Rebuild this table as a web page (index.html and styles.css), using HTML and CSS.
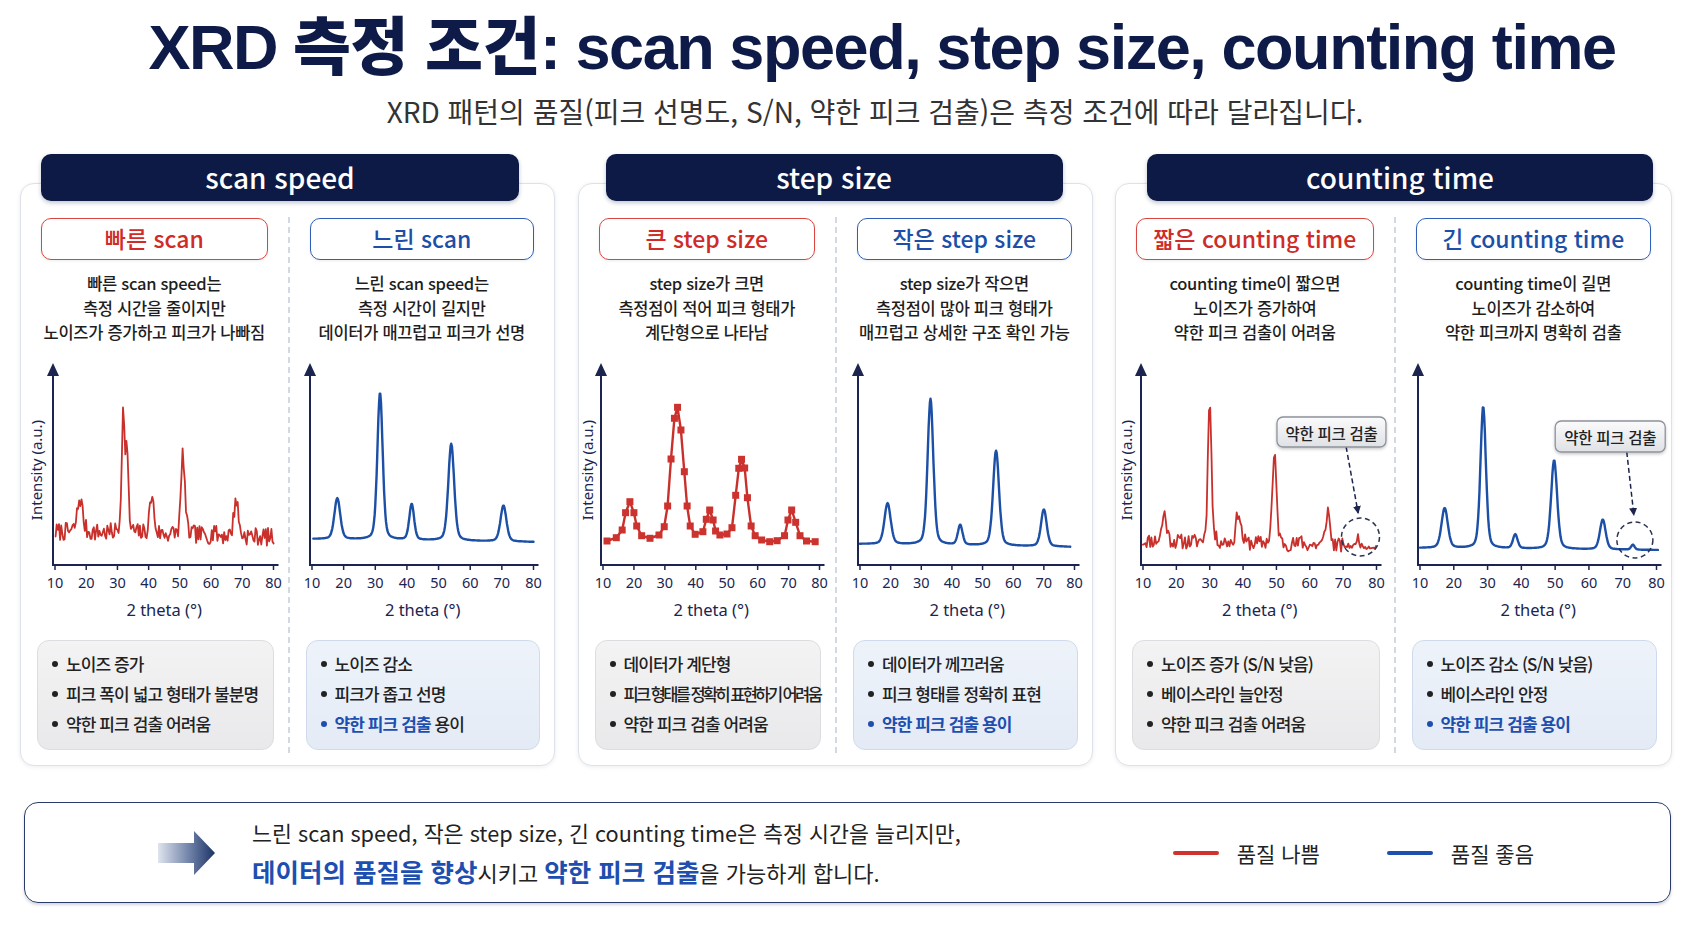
FILE: index.html
```html
<!DOCTYPE html>
<html lang="ko">
<head>
<meta charset="utf-8">
<title>XRD 측정 조건</title>
<link rel="stylesheet" href="styles.css">
</head>
<body>
<main class="page">
  <header class="hero">
    <h1 class="title">XRD <span class="title-ko">측정 조건</span>: scan speed, step size, counting time</h1>
    <p class="subtitle">XRD 패턴의 품질(피크 선명도, S/N, 약한 피크 검출)은 측정 조건에 따라 달라집니다.</p>
  </header>

  <section class="panels">
    <article class="panel panel-1">
      <h2 class="panel-head">scan speed</h2>
      <div class="panel-body">
        <div class="col">
          <div class="tag tag-bad">빠른 scan</div>
          <p class="desc">빠른 scan speed는<br>측정 시간을 줄이지만<br>노이즈가 증가하고 피크가 나빠짐</p>
          <svg class="chart" id="c1"></svg>
          <ul class="notes notes-bad">
            <li><span>노이즈 증가</span></li>
            <li><span>피크 폭이 넓고 형태가 불분명</span></li>
            <li><span>약한 피크 검출 어려움</span></li>
          </ul>
        </div>
        <div class="col col-right">
          <div class="tag tag-good">느린 scan</div>
          <p class="desc">느린 scan speed는<br>측정 시간이 길지만<br>데이터가 매끄럽고 피크가 선명</p>
          <svg class="chart" id="c2"></svg>
          <ul class="notes notes-good">
            <li><span>노이즈 감소</span></li>
            <li><span>피크가 좁고 선명</span></li>
            <li class="hl-dot"><span><b class="hl">약한 피크 검출</b> 용이</span></li>
          </ul>
        </div>
      </div>
    </article>

    <article class="panel panel-2">
      <h2 class="panel-head">step size</h2>
      <div class="panel-body">
        <div class="col">
          <div class="tag tag-bad">큰 step size</div>
          <p class="desc">step size가 크면<br>측정점이 적어 피크 형태가<br>계단형으로 나타남</p>
          <svg class="chart" id="c3"></svg>
          <ul class="notes notes-bad">
            <li><span>데이터가 계단형</span></li>
            <li class="tight"><span>피크 형태를 정확히 표현하기 어려움</span></li>
            <li><span>약한 피크 검출 어려움</span></li>
          </ul>
        </div>
        <div class="col col-right">
          <div class="tag tag-good">작은 step size</div>
          <p class="desc">step size가 작으면<br>측정점이 많아 피크 형태가<br>매끄럽고 상세한 구조 확인 가능</p>
          <svg class="chart" id="c4"></svg>
          <ul class="notes notes-good">
            <li><span>데이터가 께끄러움</span></li>
            <li><span>피크 형태를 정확히 표현</span></li>
            <li class="hl-dot"><span class="hl">약한 피크 검출 용이</span></li>
          </ul>
        </div>
      </div>
    </article>

    <article class="panel panel-3">
      <h2 class="panel-head">counting time</h2>
      <div class="panel-body">
        <div class="col">
          <div class="tag tag-bad">짧은 counting time</div>
          <p class="desc">counting time이 짧으면<br>노이즈가 증가하여<br>약한 피크 검출이 어려움</p>
          <svg class="chart" id="c5"></svg>
          <ul class="notes notes-bad">
            <li><span>노이즈 증가 (S/N 낮음)</span></li>
            <li><span>베이스라인 늘안정</span></li>
            <li><span>약한 피크 검출 어려움</span></li>
          </ul>
        </div>
        <div class="col col-right">
          <div class="tag tag-good">긴 counting time</div>
          <p class="desc">counting time이 길면<br>노이즈가 감소하여<br>약한 피크까지 명확히 검출</p>
          <svg class="chart" id="c6"></svg>
          <ul class="notes notes-good">
            <li><span>노이즈 감소 (S/N 낮음)</span></li>
            <li><span>베이스라인 안정</span></li>
            <li class="hl-dot"><span class="hl">약한 피크 검출 용이</span></li>
          </ul>
        </div>
      </div>
    </article>
  </section>

  <section class="summary">
    <svg class="summary-arrow" width="57" height="44" viewBox="0 0 57 44" aria-hidden="true">
      <defs>
        <linearGradient id="arrowGrad" x1="0" y1="0" x2="57" y2="0" gradientUnits="userSpaceOnUse">
          <stop offset="0" stop-color="#dfe4ee"/>
          <stop offset="0.55" stop-color="#6f82a8"/>
          <stop offset="1" stop-color="#1d3366"/>
        </linearGradient>
      </defs>
      <path d="M0 12 H36 V0 L57 22 L36 44 V32 H0 Z" fill="url(#arrowGrad)"/>
    </svg>
    <div class="summary-text">
      <p class="summary-line">느린 scan speed, 작은 step size, 긴 counting time은 측정 시간을 늘리지만,</p>
      <p class="summary-line summary-line-2"><strong>데이터의 품질을 향상</strong>시키고 <strong>약한 피크 검출</strong>을 가능하게 합니다.</p>
    </div>
    <div class="legend">
      <span class="legend-item"><span class="legend-line legend-bad"></span>품질 나쁨</span>
      <span class="legend-item"><span class="legend-line legend-good"></span>품질 좋음</span>
    </div>
  </section>
</main>
<script src="charts.js"></script>
</body>
</html>
```

FILE: styles.css
```css
* { box-sizing: border-box; margin: 0; padding: 0; }

html, body { background: #ffffff; }

body {
  width: 1693px;
  height: 929px;
  overflow: hidden;
  font-family: "Noto Sans CJK KR", "Noto Sans", sans-serif;
  color: #222;
}

.page { padding: 0 21px 0 20px; }

.hero {
  text-align: center;
  padding-left: 72px;
  padding-top: 14px;
}

.title {
  font-family: "Liberation Sans", "Noto Sans CJK KR", sans-serif;
  font-weight: 700;
  font-size: 63px;
  line-height: 66px;
  color: #0e1b48;
  letter-spacing: -1.45px;
}

.title-ko { letter-spacing: -0.5px; font-weight: 800; }

.subtitle {
  margin-top: 14px;
  font-size: 28px;
  line-height: 34px;
  color: #333;
  padding-right: 14px;
}

.panels {
  display: grid;
  grid-template-columns: 535px 515px 557px;
  justify-content: space-between;
  margin-top: 55px;
}

.panel {
  border: 1px solid #dde2ea;
  border-radius: 14px;
  background: #fff;
  box-shadow: 0 1px 4px rgba(20, 30, 60, 0.08);
  padding-bottom: 12px;
}

.panel-head {
  margin: -30px 27px 0;
  height: 47px;
  background: #0c1a45;
  border-radius: 10px;
  color: #fff;
  font-size: 28px;
  line-height: 46px;
  font-weight: 500;
  text-align: center;
  box-shadow: 0 2px 4px rgba(12, 26, 69, 0.25);
}

.panel-1 .panel-head { margin-left: 20px; margin-right: 35px; }
.panel-2 .panel-head { margin-left: 27px; margin-right: 29px; }
.panel-3 .panel-head { margin-left: 31px; margin-right: 18px; }

.panel-body {
  display: grid;
  grid-template-columns: 1fr 1fr;
  margin-top: 16px;
}

.col {
  display: flex;
  flex-direction: column;
  padding-bottom: 3px;
  min-width: 0;
}

.col-right { border-left: 2px dashed #d3d9e2; }

.tag {
  margin: 1px 20px 0;
  height: 42px;
  border: 1.5px solid;
  border-radius: 10px;
  background: #fff;
  font-size: 23px;
  line-height: 39px;
  font-weight: 500;
  text-align: center;
  white-space: nowrap;
  box-shadow: 0 1px 3px rgba(0, 0, 0, 0.08);
}

.tag-bad { color: #cf2b27; border-color: #d9463f; }
.tag-good { color: #1d4fa8; border-color: #2f5fb8; }

.desc {
  margin-top: 11px;
  font-size: 16.5px;
  line-height: 24.5px;
  font-weight: 500;
  text-align: center;
  color: #1e1e1e;
  white-space: nowrap;
  letter-spacing: -0.3px;
}

.chart {
  display: block;
  width: 100%;
  height: 266px;
  margin-top: 13.5px;
  overflow: visible;
}

.chart .tick { font-family: "Noto Sans", sans-serif; font-size: 14.5px; fill: #1b2550; }
.chart .xlabel { font-family: "Noto Sans", sans-serif; font-size: 16.5px; fill: #1b2550; }
.chart .ylabel { font-family: "Noto Sans", sans-serif; font-size: 15px; fill: #1b2550; }
.chart .callout { font-family: "Noto Sans CJK KR", sans-serif; font-size: 15.5px; font-weight: 500; fill: #222; letter-spacing: -0.3px; }

.notes {
  list-style: none;
  margin: 16px 14px 0 16px;
  height: 110px;
  padding: 8px 0 0 14px;
  border-radius: 12px;
  border: 1px solid;
}

.notes-bad {
  background: linear-gradient(180deg, #f3f3f4 0%, #e9e9eb 100%);
  border-color: #dcdde0;
}

.notes-good {
  background: linear-gradient(180deg, #eef3fa 0%, #e4ebf6 100%);
  border-color: #cfdbec;
}

.notes li {
  display: flex;
  align-items: center;
  gap: 8px;
  font-size: 17px;
  line-height: 30px;
  font-weight: 500;
  color: #222;
  white-space: nowrap;
  letter-spacing: -0.9px;
}

.notes li::before {
  content: "";
  flex: 0 0 6px;
  width: 6px;
  height: 6px;
  border-radius: 50%;
  background: #222;
}

.notes li.tight { font-size: 16.5px; letter-spacing: -2.6px; }

.notes .hl { color: #1d4fb0; font-weight: 700; }
.notes li.hl-dot::before { background: #1d4fb0; }

.summary {
  display: flex;
  align-items: center;
  margin: 36px 1px 0 4px;
  height: 101px;
  border: 1.5px solid #2a3b6a;
  border-radius: 14px;
  box-shadow: 0 2px 3px rgba(20, 30, 70, 0.18);
  padding: 0 136px 0 133px;
}

.summary-arrow { flex: 0 0 57px; }

.summary-text { margin-left: 37px; }

.summary-line {
  font-size: 21.7px;
  line-height: 38px;
  color: #222;
  white-space: nowrap;
}

.summary-line-2 { font-size: 22px; }

.summary-line strong {
  color: #1d4fb0;
  font-weight: 700;
  font-size: 25.5px;
}

.legend {
  margin-left: auto;
  display: flex;
  align-items: center;
  gap: 67px;
}

.legend-item {
  display: flex;
  align-items: center;
  gap: 18px;
  font-size: 21px;
  color: #222;
}

.legend-line {
  width: 46px;
  height: 4px;
  border-radius: 2px;
}

.legend-bad { background: #d0322c; }
.legend-good { background: #1d4fb0; }
```

FILE: charts.js
```js
(function () {
  var NS = 'http://www.w3.org/2000/svg';
  var RED = '#c9302b', BLUE = '#1c4fa6', AXIS = '#1b2550';
  var AXIS_Y = 207;

  function mk(tag, attrs, parent, text) {
    var e = document.createElementNS(NS, tag);
    for (var k in attrs) e.setAttribute(k, attrs[k]);
    if (text != null) e.textContent = text;
    if (parent) parent.appendChild(e);
    return e;
  }
  function rng(seed) {
    var s = seed >>> 0;
    return function () { s = (Math.imul(s, 1664525) + 1013904223) >>> 0; return s / 4294967296; };
  }
  function pk(t, c, f) {
    var d = (t - c) / f;
    return 0.7 * Math.exp(-4 * Math.LN2 * d * d) + 0.3 / (1 + 4 * d * d);
  }

  var CFG = {
    c1: { ax: 32, ex: 9, yl: 15, kind: 'noisy', color: RED, seed: 7, b0: 33, b1: 28, amp: 9, step: 0.36, range: [10.2, 80.3],
      peaks: [[18, 34, 2.0], [31.8, 116, 1.1], [33, 82, 1.1], [41, 38, 1.6], [51, 82, 1.4], [61, 12, 0.5], [68, 38, 1.6]] },
    c2: { ax: 20, ex: 16, kind: 'smooth', color: BLUE, b0: 26, b1: 23, range: [10.4, 80],
      peaks: [[18, 41, 2.2], [31.5, 147, 2.0], [41.5, 36, 1.8], [54, 97, 2.2], [70.5, 36, 2.2]] },
    c3: { ax: 22, ex: 11, yl: 8, kind: 'steps', color: RED,
      pts: [[11.3, 24], [14.3, 27.3], [16.2, 35], [17.3, 52.3], [18.7, 63.3], [20, 52.3], [20.9, 39], [22.5, 29.3], [25.2, 26.7],
        [28.1, 30], [29.8, 38.3], [30.9, 59], [32, 106], [33.1, 146.7], [34.1, 157.7], [35.2, 135], [36.3, 93.3], [37.2, 59],
        [38.2, 39], [39.8, 30.7], [42.3, 33.3], [43.4, 45.7], [44.5, 55], [45.6, 45], [46.4, 34], [47.8, 30], [50.1, 31],
        [51.7, 37.3], [52.9, 69.7], [53.9, 96.7], [54.8, 105.7], [55.8, 97], [56.7, 67.3], [57.9, 39], [59.2, 29.3], [61.3, 25],
        [63.9, 23.3], [66.3, 24.3], [68.7, 29.3], [69.8, 45], [71, 55], [72.3, 42.7], [73.7, 29.3], [75.8, 24], [78.6, 23.3]] },
    c4: { ax: 21, ex: 12, kind: 'smooth', color: BLUE, b0: 21, b1: 18, range: [10, 78.7],
      peaks: [[19, 41, 2.4], [33, 146, 2.2], [42.7, 20, 1.8], [54.4, 95, 2.3], [70, 37, 2.2]] },
    c5: { ax: 25, ex: 12, yl: 10, kind: 'noisy', color: RED, seed: 11, b0: 24, b1: 18, amp: 7.5, ampQ: 2.5, quiet: 70, step: 0.36, range: [10, 80],
      peaks: [[16.4, 28, 1.6], [30, 150, 1.2], [38.6, 32, 1.6], [49.4, 88, 1.5], [57.5, 10, 0.5], [65.4, 35, 1.5], [74.4, 11, 0.8]],
      call: { cx: 66.5, w: 109, top: 148, h: 30, a0: [70.9, 118], a1: [74.5, 50], cc: [75.2, 28], r: 19 } },
    c6: { ax: 22, ex: 10, kind: 'smooth', color: BLUE, b0: 17, b1: 15, range: [10, 80.5],
      peaks: [[17.3, 40, 2.2], [28.7, 142, 1.9], [38.2, 14, 1.6], [49.7, 89, 2.1], [64.1, 30, 2.0], [73, 5, 1.2]],
      call: { cx: 66.3, w: 110, top: 144, h: 31, a0: [71.2, 113], a1: [73.3, 48], cc: [73.6, 25], r: 18 } }
  };

  function draw(id) {
    var c = CFG[id];
    var svg = document.getElementById(id);
    var W = svg.getBoundingClientRect().width;
    svg.setAttribute('viewBox', '0 0 ' + W + ' 266');
    var t10 = c.ax + 2, t80 = W - c.ex - 5;
    function X(t) { return t10 + (t - 10) * (t80 - t10) / 70; }
    function Y(h) { return AXIS_Y - h; }

    var defs = mk('defs', {}, svg);

    /* axes */
    mk('line', { x1: c.ax, y1: 16, x2: c.ax, y2: AXIS_Y + 1, stroke: AXIS, 'stroke-width': 2 }, svg);
    mk('path', { d: 'M' + (c.ax - 6) + ' 18 L' + c.ax + ' 5 L' + (c.ax + 6) + ' 18 Z', fill: AXIS }, svg);
    mk('line', { x1: c.ax - 1, y1: AXIS_Y, x2: W - c.ex, y2: AXIS_Y, stroke: AXIS, 'stroke-width': 2 }, svg);
    for (var t = 10; t <= 80; t += 10) {
      var x = X(t);
      mk('line', { x1: x, y1: AXIS_Y, x2: x, y2: AXIS_Y + 5, stroke: AXIS, 'stroke-width': 1.5 }, svg);
      mk('text', { x: x, y: AXIS_Y + 17, 'text-anchor': 'middle', 'dominant-baseline': 'central', class: 'tick' }, svg, String(t));
    }
    mk('text', { x: (t10 + t80) / 2, y: AXIS_Y + 44, 'text-anchor': 'middle', 'dominant-baseline': 'central', class: 'xlabel' }, svg, '2 theta (°)');
    if (c.yl != null) {
      mk('text', { x: c.yl, y: 112, 'text-anchor': 'middle', 'dominant-baseline': 'central', class: 'ylabel',
        transform: 'rotate(-90 ' + c.yl + ' 112)' }, svg, 'Intensity (a.u.)');
    }

    /* data */
    var pts = [];
    if (c.kind === 'steps') {
      pts = c.pts.map(function (p) { return [X(p[0]), Y(p[1])]; });
    } else {
      var rand = c.seed ? rng(c.seed) : null;
      var step = c.step || 0.2;
      for (var tt = c.range[0]; tt <= c.range[1] + 1e-6; tt += step) {
        var h = c.b0 + (c.b1 - c.b0) * (tt - 10) / 70;
        for (var i = 0; i < c.peaks.length; i++) h += c.peaks[i][1] * pk(tt, c.peaks[i][0], c.peaks[i][2]);
        if (rand) {
          var amp = (c.quiet && tt > c.quiet) ? c.ampQ : c.amp;
          h += (rand() * 2 - 1) * amp;
        }
        pts.push([X(tt), Y(h)]);
      }
    }
    var d = pts.map(function (p, i) { return (i ? 'L' : 'M') + p[0].toFixed(1) + ' ' + p[1].toFixed(1); }).join(' ');
    mk('path', { d: d, fill: 'none', stroke: c.color, 'stroke-width': c.kind === 'noisy' ? 1.8 : 2.4,
      'stroke-linejoin': 'round', 'stroke-linecap': 'round' }, svg);
    if (c.kind === 'steps') {
      pts.forEach(function (p) {
        mk('rect', { x: p[0] - 3.5, y: p[1] - 3.5, width: 7, height: 7, fill: '#cc332e' }, svg);
      });
    }

    /* callout */
    if (c.call) {
      var k = c.call;
      var gid = id + '-cg', fid = id + '-sh', mid = id + '-ah';
      var g = mk('linearGradient', { id: gid, x1: 0, y1: 0, x2: 0, y2: 1 }, defs);
      mk('stop', { offset: 0, 'stop-color': '#fbfbfc' }, g);
      mk('stop', { offset: 1, 'stop-color': '#dfe1e5' }, g);
      var f = mk('filter', { id: fid, x: '-20%', y: '-30%', width: '140%', height: '170%' }, defs);
      mk('feDropShadow', { dx: 0, dy: 1.5, stdDeviation: 1.5, 'flood-color': '#000', 'flood-opacity': 0.22 }, f);
      var m = mk('marker', { id: mid, markerWidth: 10, markerHeight: 10, refX: 7, refY: 4, orient: 'auto', markerUnits: 'userSpaceOnUse' }, defs);
      mk('path', { d: 'M0 0 L8 4 L0 8 Z', fill: AXIS }, m);

      mk('circle', { cx: X(k.cc[0]), cy: Y(k.cc[1]), r: k.r, fill: 'none', stroke: '#2a3350', 'stroke-width': 1.5, 'stroke-dasharray': '5 3.5' }, svg);
      mk('line', { x1: X(k.a0[0]), y1: Y(k.a0[1]), x2: X(k.a1[0]), y2: Y(k.a1[1]) - 2, stroke: AXIS, 'stroke-width': 1.5,
        'stroke-dasharray': '5 3', 'marker-end': 'url(#' + mid + ')' }, svg);
      var bx = X(k.cx) - k.w / 2, by = Y(k.top);
      mk('rect', { x: bx, y: by, width: k.w, height: k.h, rx: 6, fill: 'url(#' + gid + ')', stroke: '#8d929b', 'stroke-width': 1.3,
        filter: 'url(#' + fid + ')' }, svg);
      mk('text', { x: bx + k.w / 2, y: by + k.h / 2 + 0.5, 'text-anchor': 'middle', 'dominant-baseline': 'central', class: 'callout' }, svg, '약한 피크 검출');
    }
  }

  function run() { Object.keys(CFG).forEach(draw); }
  if (document.readyState === 'loading') document.addEventListener('DOMContentLoaded', run); else run();
})();
```
